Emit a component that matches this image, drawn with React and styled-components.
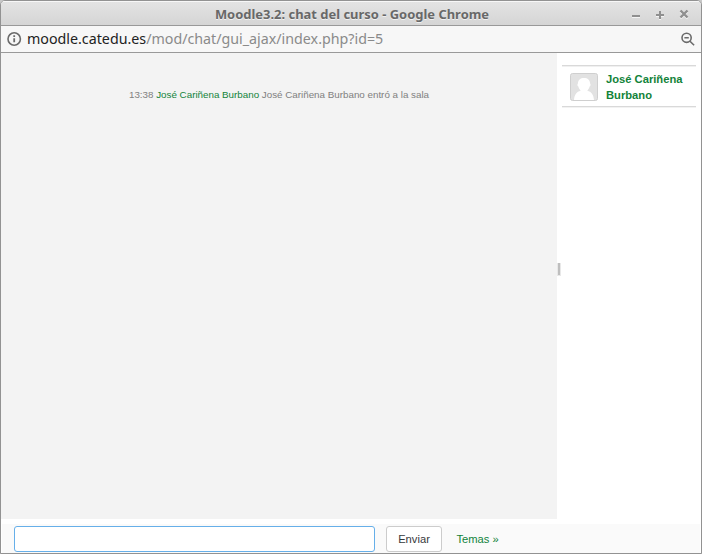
import React from 'react';
import styled, { createGlobalStyle } from 'styled-components';

const GlobalStyle = createGlobalStyle`
  * { box-sizing: border-box; }
  html, body { margin: 0; background: #c8c8c8; }
  body { font-family: "Liberation Sans", Arial, sans-serif; }
`;

const Window = styled.div`
  width: 702px;
  height: 554px;
  display: flex;
  flex-direction: column;
  overflow: hidden;
  border: 1px solid #929292;
  border-radius: 5px 5px 0 0;
  background: #fff;
`;

const TitleBar = styled.header`
  height: 25px;
  flex: none;
  display: grid;
  grid-template-columns: 1fr auto 1fr;
  align-items: center;
  border-top: 1px solid #f7f7f7;
  border-bottom: 1px solid #999;
  background: linear-gradient(#e3e3e3, #d5d5d5);
`;

const Title = styled.h1`
  grid-column: 2;
  margin: 0 -1px 0 1px;
  font: bold 12.95px/22px "Noto Sans", sans-serif;
  color: #686868;
  text-shadow: 0 1px 0 #f0f0f0;
  white-space: nowrap;
`;

const WindowControls = styled.svg`
  width: 62px;
  height: 16px;
  justify-self: end;
  margin: -2px 10px 0 0;
  filter: drop-shadow(0 1px 0 #f4f4f4);
`;

const AddressBar = styled.div`
  height: 27px;
  flex: none;
  display: flex;
  align-items: center;
  padding: 0 5px 0 6px;
  border-bottom: 1px solid #999;
  background: #f7f7f7;
`;

const BarIcon = styled.svg`
  width: 16px;
  height: 16px;
  flex: none;
  fill: none;
  stroke: #6b6b6b;
  stroke-width: 1.6;
`;

const Url = styled.div`
  flex: 1;
  margin: 0 0 0 4px;
  font: 14.25px/24px "Noto Sans", sans-serif;
  color: #8a8a8a;
  white-space: nowrap;
`;

const Host = styled.span`
  color: #222;
`;

const Chat = styled.main`
  height: 466px;
  flex: none;
  display: flex;
`;

const Messages = styled.section`
  width: 556px;
  padding-top: 35px;
  background: #f3f3f3;
  text-align: center;
`;

const Message = styled.p`
  margin: 0;
  font-size: 9.8px;
  line-height: 14px;
  color: #808080;
`;

const Author = styled.span`
  color: #12833a;
`;

const Divider = styled.div`
  width: 5px;
  display: flex;
  align-items: center;
  padding: 0 1px 33px 0;
`;

const Grip = styled.div`
  width: 4px;
  height: 13px;
  border: solid #e8e8e8;
  border-width: 0 1px 1px;
  background: #bebebe;
`;

const Users = styled.aside`
  width: 134px;
  padding-top: 12px;
`;

const User = styled.div`
  height: 42px;
  display: flex;
  gap: 8px;
  padding: 7px 0 0 8px;
  border: solid #d9d9d9;
  border-width: 1px 0;
  box-shadow: inset 0 1px 0 #f0f0f0, 0 1px 0 #f2f2f2;
`;

const Avatar = styled.svg`
  width: 28px;
  height: 28px;
  flex: none;
`;

const UserName = styled.div`
  margin-top: -2px;
  font-size: 11.2px;
  line-height: 16px;
  font-weight: bold;
  color: #12833a;
`;

const Composer = styled.form`
  height: 29px;
  flex: none;
  display: flex;
  align-items: flex-start;
  margin: 5px 1px 0;
  padding: 2px 0 0 12px;
  background: #fafafa;
`;

const MessageInput = styled.input`
  width: 361px;
  height: 26px;
  border: 1px solid #66afe9;
  border-radius: 3px;
  background: #fff;
  outline: none;
`;

const SendButton = styled.button`
  width: 56px;
  height: 26px;
  margin-left: 11px;
  padding: 0;
  border: 1px solid #ccc;
  border-radius: 3px;
  background: #fff;
  font: 11.2px/24px "Liberation Sans", sans-serif;
  color: #373a3c;
`;

const ThemesLink = styled.a`
  margin-left: 14.4px;
  font-size: 11.2px;
  line-height: 26px;
  color: #12833a;
`;

export default function App() {
  return (
    <>
      <GlobalStyle />
      <Window>
        <TitleBar>
          <Title>Moodle3.2: chat del curso - Google Chrome</Title>
          <WindowControls viewBox="0 0 62 16" fill="none" stroke="#8f8f8f" strokeWidth="2">
            <path d="M3 11h8M27 10h8M31 6v8" />
            <path d="m51.5 5.500 7 7m0-7-7 7" strokeWidth="2.4" />
          </WindowControls>
        </TitleBar>
        <AddressBar>
          <BarIcon viewBox="0 0 16 16">
            <circle cx="7.2" cy="8" r="6.2" />
            <path d="M7.2 7.2v4M7.2 4.3v1.7" strokeWidth="1.8" />
          </BarIcon>
          <Url><Host>moodle.catedu.es</Host>/mod/chat/gui_ajax/index.php?id=5</Url>
          <BarIcon viewBox="0 0 16 16">
            <circle cx="6.6" cy="6.8" r="4.6" />
            <path d="m10 10.200 4.100 4.100M4.400 6.800h4.400" />
          </BarIcon>
        </AddressBar>
        <Chat>
          <Messages>
            <Message>13:38 <Author>José Cariñena Burbano</Author> José Cariñena Burbano entró a la sala</Message>
          </Messages>
          <Divider><Grip /></Divider>
          <Users>
            <User>
              <Avatar viewBox="0 0 28 28">
                <rect x=".5" y=".5" width="27" height="27" rx="2" fill="#e2e2e2" stroke="#cfcfcf" />
                <path d="M4 27c.5-5.500 2.500-8.200 6.700-9.200-1-1-2-2.500-2.300-4.200-1.100-.6-1.300-2.400-.5-3.100C8 7 10.300 5 14 5s6 2 6.100 5.500c.8.700.6 2.500-.5 3.100-.3 1.700-1.300 3.200-2.300 4.200C21.500 18.800 23.500 21.500 24 27z" fill="#fff" />
              </Avatar>
              <UserName>José Cariñena<br />Burbano</UserName>
            </User>
          </Users>
        </Chat>
        <Composer onSubmit={(event) => event.preventDefault()}>
          <MessageInput type="text" />
          <SendButton>Enviar</SendButton>
          <ThemesLink>Temas »</ThemesLink>
        </Composer>
      </Window>
    </>
  );
}
